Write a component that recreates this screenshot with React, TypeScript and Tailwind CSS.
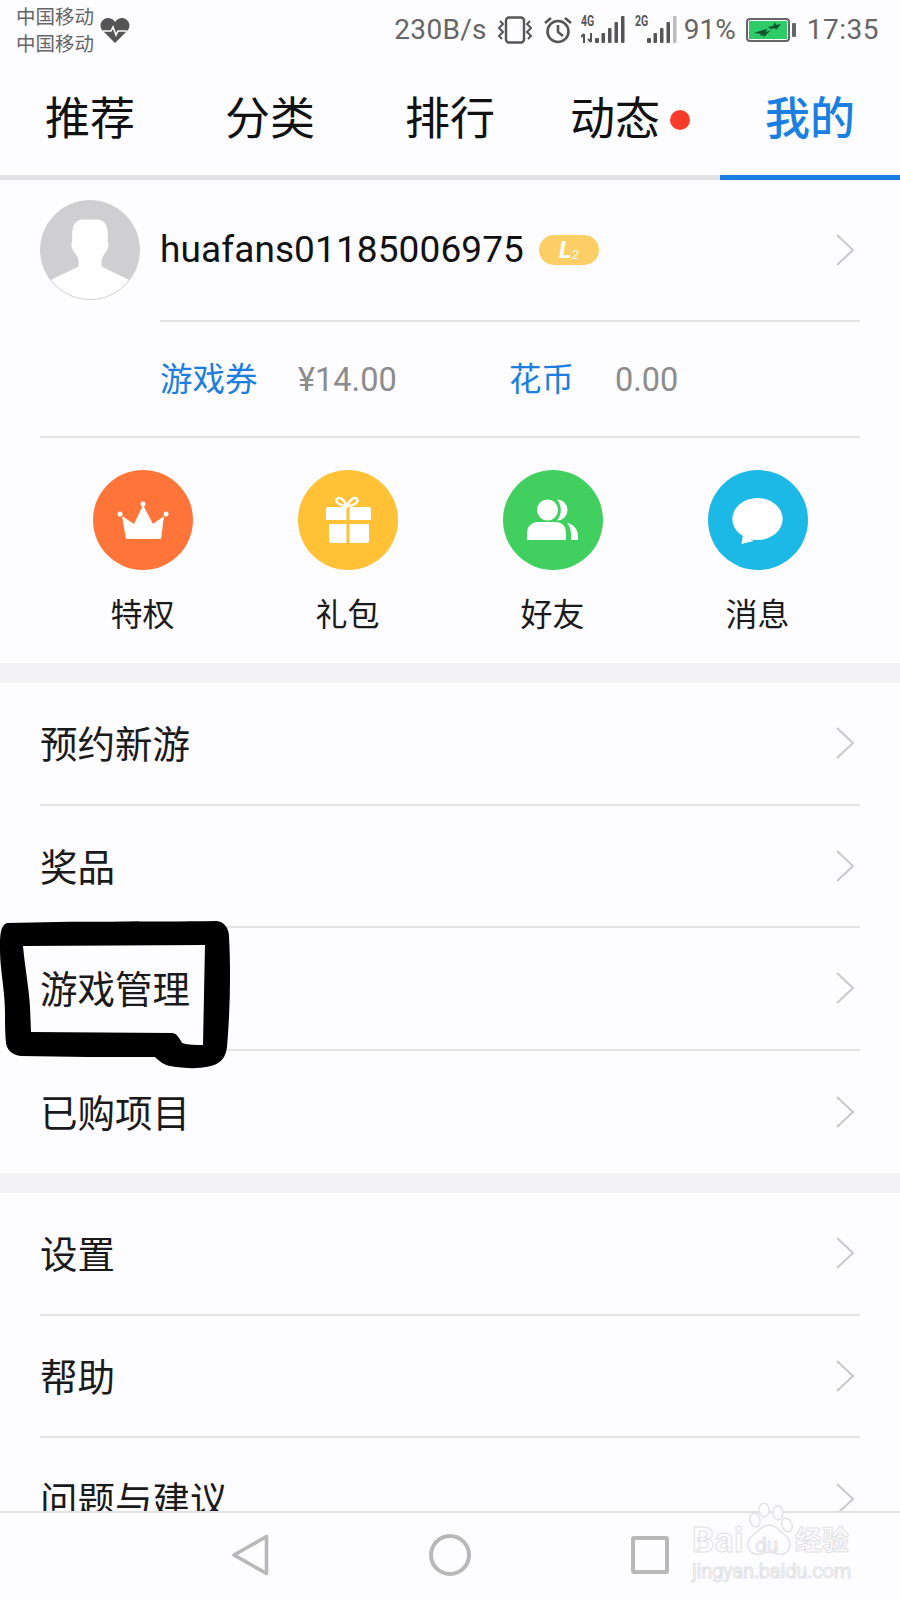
const tabs = [
  { label: "推荐" },
  { label: "分类" },
  { label: "排行" },
  { label: "动态", dot: true },
  { label: "我的", active: true },
];

const Chevron = () => (
  <svg width="20" height="32" viewBox="0 0 20 32" fill="none" className="shrink-0">
    <path d="M2 1l16 15L2 31" stroke="#c9c9cd" strokeWidth="2" />
  </svg>
);

const Row = ({ label, last }: { label: string; last?: boolean }) => (
  <div className={`mx-10 h-[122.5px] shrink-0 flex items-center justify-between pr-[5px] ${last ? "" : "border-b-2 border-[#e4e4e7]"}`}>
    <span className="mt-[4px] text-[37.500px] text-[#1a1a1a]">{label}</span>
    <Chevron />
  </div>
);

// five thin bars, the last one can be greyed out
const Bars = ({ dim }: { dim?: boolean }) => (
  <svg width="30" height="28" viewBox="0 0 30 28" fill="#555">
    <rect x="0" y="22" width="4" height="5" rx="1" />
    <rect x="6.500" y="17" width="3.500" height="10" rx="1" />
    <rect x="13" y="12" width="3.500" height="15" rx="1" />
    <rect x="19.500" y="6" width="3.500" height="21" rx="1" />
    <rect x="26" y="0" width="3.500" height="27" rx="1" fill={dim ? "#bbb" : "#555"} />
  </svg>
);

const StatusBar = () => (
  <div className="h-[70px] shrink-0 flex justify-between pl-4 pr-[21px] text-[#666]">
    <div className="flex items-center gap-[6px]">
      <div className="text-[19.500px] leading-[27px] mt-[-8px]">
        <div>中国移动</div>
        <div>中国移动</div>
      </div>
      <svg width="30" height="26" viewBox="0 0 30 26" className="mt-[-8px]">
        <path d="M15 25L2 12C-2 6 3 0 8 0c3 0 6 2 7 4 1-2 4-4 7-4 5 0 10 6 6 12z" fill="#555" />
        <path d="M3 13h8l2-4 3 8 2-4h9" stroke="#fff" strokeWidth="1.600" fill="none" />
      </svg>
    </div>
    <div className="flex items-center h-[60px] text-[28px]">
      <span className="tracking-[0.300px]">230B/s</span>
      <svg width="38" height="28" viewBox="0 0 38 28" fill="none" stroke="#555" strokeWidth="2.400" className="ml-[9px]">
        <rect x="10" y="1.500" width="18" height="25" rx="3" />
        <path d="M4 5l3 3-4 4 4 4-4 4 3 3M34 5l-3 3 4 4-4 4 4 4-3 3" strokeWidth="2" />
      </svg>
      <svg width="30" height="28" viewBox="0 0 30 28" fill="none" stroke="#555" strokeWidth="2.600" className="ml-[9px]">
        <circle cx="15" cy="15.500" r="10.500" />
        <path d="M15 9v7l5 4M2 7l6-5M28 7l-6-5" />
      </svg>
      <div className="relative ml-[8px] w-[44px] h-[28px]">
        <span className="absolute left-0 top-[-2px] text-[14px] font-bold leading-[14px] text-[#555] origin-left scale-x-75">4G</span>
        <svg width="15" height="10" viewBox="0 0 15 10" fill="none" stroke="#555" strokeWidth="2" className="absolute left-0 bottom-[1px]">
          <path d="M3 10V1M0 4l3-3M10 0v9M7 6l3 3" />
        </svg>
        <div className="absolute right-0 top-0"><Bars /></div>
      </div>
      <div className="relative ml-[10px] w-[42px] h-[28px]">
        <span className="absolute left-0 top-[-2px] text-[14px] font-bold leading-[14px] text-[#555] origin-left scale-x-75">2G</span>
        <div className="absolute right-0 top-0"><Bars dim /></div>
      </div>
      <span className="ml-[7px]">91%</span>
      <div className="ml-[10px] w-[44px] h-[24px] rounded-[4px] border-2 border-[#666] p-[1px] flex">
        <div className="flex-1 bg-[#2ecc68] flex items-center justify-center">
          <svg width="30" height="16" viewBox="0 0 30 16" fill="#14532d">
            <path d="M1 11l9-3 4-1-1 3 5-2-8 8 1-3-4 1 1-2zM15 5l5-1 2-4 1 3 5-1-5 6-1-2-4 1z" />
          </svg>
        </div>
      </div>
      <div className="ml-[2px] w-[4px] h-[14px] rounded-[1px] bg-[#666]" />
      <span className="ml-[11px] tracking-[0.500px]">17:35</span>
    </div>
  </div>
);

const TabBar = () => (
  <div className="shrink-0">
    <div className="h-[105px] grid grid-cols-5">
      {tabs.map((t) => (
        <div key={t.label} className="flex items-center justify-center pb-[5px]">
          <span className={`text-[45px] ${t.active ? "text-[#1a7fe0] font-medium" : "text-[#111]"}`}>{t.label}</span>
          {t.dot && <span className="ml-[10px] w-5 h-5 rounded-full bg-[#f73b2b]" />}
        </div>
      ))}
    </div>
    <div className="h-[5px] bg-[#e2e2e4] flex justify-end">
      <div className="w-[180px] bg-[#1a7fe0]" />
    </div>
  </div>
);

const Profile = () => (
  <div className="mx-10 flex shrink-0">
    <div className="mt-5 w-[100px] h-[100px] rounded-full overflow-hidden bg-[#cfcfd1] border border-[#cfcfd1] shrink-0">
      <svg viewBox="0 0 100 100" className="w-full h-full">
        <path d="M5 84l8-5 25-12c1-5 0-9-2-12-3-3-5-7-5-11l1-4c-1-12 1-20 10-21h16c9 1 11 9 10 21l1 4c0 4-2 8-5 11-2 3-3 7-2 12l25 12 8 5v26H5z" fill="#fff" />
      </svg>
    </div>
    <div className="ml-5 flex-1 h-[142px] border-b-2 border-[#e4e4e7] flex items-center justify-between pr-[5px]">
      <div className="flex items-center">
        <span className="text-[37px] text-[#111] tracking-[0.100px]">huafans01185006975</span>
        <span className="ml-[15px] w-[60px] h-[30px] rounded-[15px] bg-[#fbcf66] flex items-center justify-center text-white">
          <span className="text-[24px] font-bold italic leading-none">L</span>
          <span className="text-[13px] italic leading-none mt-2">2</span>
        </span>
      </div>
      <Chevron />
    </div>
  </div>
);

const Stats = () => (
  <div className="mx-10 h-[116px] shrink-0 border-b-2 border-[#e4e4e7] pl-[120px] pt-[3px] flex items-center text-[32.500px]">
    <span className="w-[138px] text-[#1a7fe0]">游戏券</span>
    <span className="w-[211px] text-[#8c8c8c]">¥14.00</span>
    <span className="w-[106px] text-[#1a7fe0]">花币</span>
    <span className="text-[#8c8c8c]">0.00</span>
  </div>
);

const CrownIcon = () => (
  <svg viewBox="0 0 100 100" className="w-full h-full" fill="#fff">
    <path d="M29 46l12 8 9-19 10 19 11-8-3 23H33z" />
    <circle cx="27" cy="44" r="2.500" />
    <circle cx="50" cy="34" r="2.500" />
    <circle cx="73" cy="44" r="2.500" />
  </svg>
);

const GiftIcon = () => (
  <svg viewBox="0 0 100 100" className="w-full h-full" fill="#fff">
    <path d="M30 37h18.500v13H28V39a2 2 0 012-2zM51.500 37H71a2 2 0 012 2v11H51.500zM31 54h17.500v19H33a2 2 0 01-2-2zM51.500 54H71v17a2 2 0 01-2 2H51.500z" />
    <path d="M49 36c-3-7-8-10-10-7s3 7 10 7c7 0 12-4 10-7s-7 0-10 7z" fill="none" stroke="#fff" strokeWidth="2.400" />
  </svg>
);

const FriendsIcon = () => (
  <svg viewBox="0 0 100 100" className="w-full h-full" fill="#fff">
    <circle cx="44.500" cy="40" r="10.500" />
    <path d="M24 70v-7c0-7 5-11 11-11h17c7 0 11 4 11 11v7z" />
    <path d="M54 29.500a10.500 10.500 0 110 21c2.500-3 3.800-6.500 3.800-10.500s-1.300-7.500-3.800-10.500z" />
    <path d="M64 53c6 1 11 6 11 13v4h-7v-5c0-5-1-9-4-12z" />
  </svg>
);

const ChatIcon = () => (
  <svg viewBox="0 0 100 100" className="w-full h-full" fill="#fff">
    <ellipse cx="49.500" cy="49" rx="25.200" ry="21" />
    <path d="M35 64l-1.500 10 12-3z" />
  </svg>
);

const quick = [
  { label: "特权", color: "bg-[#ff7539]", icon: <CrownIcon /> },
  { label: "礼包", color: "bg-[#ffc135]", icon: <GiftIcon /> },
  { label: "好友", color: "bg-[#41d05f]", icon: <FriendsIcon /> },
  { label: "消息", color: "bg-[#1cb8e6]", icon: <ChatIcon /> },
];

const QuickLinks = () => (
  <div className="mx-10 h-[225px] shrink-0 grid grid-cols-4 pt-8">
    {quick.map((q) => (
      <div key={q.label} className="flex flex-col items-center">
        <div className={`w-[100px] h-[100px] rounded-full ${q.color}`}>{q.icon}</div>
        <span className="mt-[22px] text-[32px] leading-[46px] text-[#1a1a1a]">{q.label}</span>
      </div>
    ))}
  </div>
);

const Gap = () => <div className="h-5 shrink-0 bg-[#f4f4f6]" />;

const BottomNav = () => (
  <div className="h-[89px] shrink-0 border-t-2 border-[#e2e2e5] bg-[#fdfcfe] pb-1">
    <div className="w-[600px] h-full mx-auto grid grid-cols-3 place-items-center">
      <svg width="38" height="42" viewBox="0 0 38 42" fill="none">
        <path d="M35.500 2.500v37L3 21z" stroke="#b8b8b8" strokeWidth="3.600" strokeLinejoin="round" />
      </svg>
      <div className="w-[42px] h-[42px] rounded-full border-4 border-[#b8b8b8]" />
      <div className="w-[38px] h-[38px] rounded-[3px] border-4 border-[#b8b8b8]" />
    </div>
  </div>
);

const Watermark = () => (
  <div className="absolute left-[690px] top-[1500px] w-[166px] h-[82px] text-[#fdfcfe] [-webkit-text-stroke:1px_#e2e2e6]">
    <svg width="50" height="56" viewBox="0 0 50 56" fill="#fdfcfe" stroke="#e2e2e6" strokeWidth="1.400" className="absolute left-[55px] top-[3px]">
      <ellipse cx="10" cy="17" rx="5" ry="7" transform="rotate(-15 10 17)" />
      <ellipse cx="19" cy="7" rx="5" ry="7" />
      <ellipse cx="33" cy="10" rx="5" ry="7" />
      <ellipse cx="42" cy="22" rx="5" ry="7" transform="rotate(-20 42 22)" />
      <path d="M24 22c7 0 10 6 16 10 5 4 6 10 4 14-2 5-8 6-12 5-3-1-5-2-8-2s-5 1-8 2c-4 1-10 0-12-5-2-4-1-10 4-14 6-4 9-10 16-10z" />
    </svg>
    <span className="absolute left-[2px] top-[23px] text-[35px] font-bold leading-[36px] tracking-[0.500px]">Bai</span>
    <span className="absolute left-[65px] top-[33px] text-[21px] leading-[24px]">du</span>
    <span className="absolute left-[105px] top-[21px] text-[27px] font-bold leading-[40px]">经验</span>
    <span className="absolute left-[2px] top-[60px] text-[20px] leading-[22px] tracking-[-0.200px]">jingyan.baidu.com</span>
  </div>
);

// hand drawn marker around the 游戏管理 row
const Scribble = () => (
  <svg width="232" height="172" viewBox="0 0 232 172" className="absolute left-0 top-[900px]">
    <path
      fillRule="evenodd"
      d="M8 23C70 21 150 22 217 21c8 1 12 8 12 16 2 35 1 75-2 110-1 8-4 13-9 16-8 5-26 7-48 3-6-1-11-5-15-9-45 0-90 0-134-1-9-1-14-6-15-13-1-10-1-20-1-30C5 90 0 70 0 50c0-14 0-26 8-27zM23 46c2 22 6 42 7 61l1 25 141 1c4 0 7 4 10 10 6 2 14 2 21 2l2-100z"
      fill="#000"
    />
  </svg>
);

export default function App() {
  return (
    <div className="relative w-[900px] h-[1600px] overflow-hidden flex flex-col bg-[#fdfcfe] font-['Roboto','Noto_Sans_CJK_SC',sans-serif]">
      <StatusBar />
      <TabBar />
      <div className="flex-1 min-h-0 overflow-hidden flex flex-col">
        <Profile />
        <Stats />
        <QuickLinks />
        <Gap />
        <Row label="预约新游" />
        <Row label="奖品" />
        <Row label="游戏管理" />
        <Row label="已购项目" last />
        <Gap />
        <Row label="设置" />
        <Row label="帮助" />
        <Row label="问题与建议" last />
      </div>
      <BottomNav />
      <Scribble />
      <Watermark />
    </div>
  );
}
